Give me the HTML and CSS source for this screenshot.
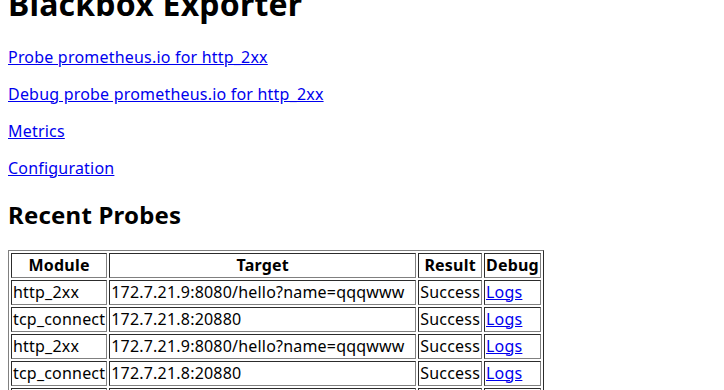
FILE: index.html
```html
<!DOCTYPE html>
<html lang="en">
<head>
  <meta charset="UTF-8">
  <title>Blackbox Exporter</title>
  <link rel="stylesheet" href="styles.css">
</head>
<body>
  <h1>Blackbox Exporter</h1>
  <p><a href="probe?target=prometheus.io&module=http_2xx">Probe prometheus.io for http_2xx</a></p>
  <p><a href="probe?target=prometheus.io&module=http_2xx&debug=true">Debug probe prometheus.io for http_2xx</a></p>
  <p><a href="metrics">Metrics</a></p>
  <p><a href="config">Configuration</a></p>
  <h2>Recent Probes</h2>
  <table border="1">
    <tr><th>Module</th><th class="target">Target</th><th>Result</th><th>Debug</th></tr>
    <tr><td>http_2xx</td><td>172.7.21.9:8080/hello?name=qqqwww</td><td>Success</td><td><a href="logs?id=1">Logs</a></td></tr>
    <tr><td>tcp_connect</td><td>172.7.21.8:20880</td><td>Success</td><td><a href="logs?id=2">Logs</a></td></tr>
    <tr><td>http_2xx</td><td>172.7.21.9:8080/hello?name=qqqwww</td><td>Success</td><td><a href="logs?id=3">Logs</a></td></tr>
    <tr><td>tcp_connect</td><td>172.7.21.8:20880</td><td>Success</td><td><a href="logs?id=4">Logs</a></td></tr>
    <tr><td>http_2xx</td><td>172.7.21.9:8080/hello?name=qqqwww</td><td>Success</td><td><a href="logs?id=5">Logs</a></td></tr>
    <tr><td>tcp_connect</td><td>172.7.21.8:20880</td><td>Success</td><td><a href="logs?id=6">Logs</a></td></tr>
  </table>
  <script>
    window.scrollTo(0, 38);
  </script>
</body>
</html>
```
FILE: styles.css
```css
body {
  font-family: "Noto Sans", "Open Sans", sans-serif;
  font-size: 16px;
  line-height: 21px;
  letter-spacing: 0.2px;
}

h1 {
  line-height: 42px;
}

h2 {
  line-height: 31px;
}

a {
  color: #0000ee;
}

th.target {
  width: 303px;
}
```
